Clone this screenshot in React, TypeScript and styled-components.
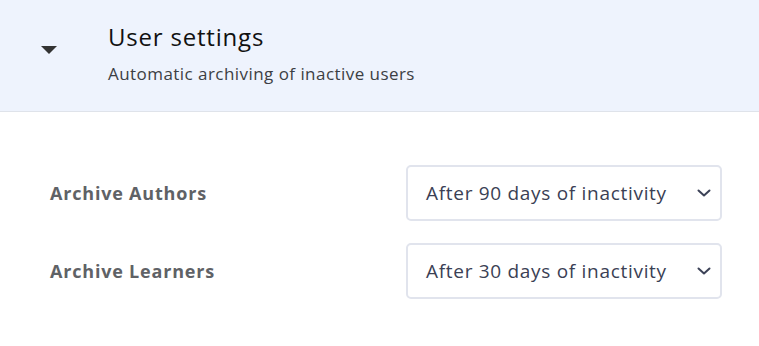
import React from "react";
import styled, { createGlobalStyle } from "styled-components";

const Global = createGlobalStyle`
  html, body { margin: 0; padding: 0; background: #ffffff; }
  body { font-family: "Open Sans", "Noto Sans", sans-serif; }
`;

const Page = styled.div`
  width: 759px;
  height: 346px;
  background: #ffffff;
`;

const Header = styled.div`
  display: flex;
  align-items: flex-start;
  height: 112px;
  box-sizing: border-box;
  background: #eef3fd;
  border-bottom: 1px solid #dfe3ea;
`;

const ToggleCell = styled.div`
  width: 108px;
  display: flex;
  justify-content: flex-start;
  padding-left: 41px;
  padding-top: 46px;
  box-sizing: border-box;
`;

const Caret = styled.div`
  width: 0;
  height: 0;
  border-left: 8px solid transparent;
  border-right: 8px solid transparent;
  border-top: 8px solid #333333;
`;

const HeaderText = styled.div`
  display: flex;
  flex-direction: column;
  padding-top: 22px;
`;

const Title = styled.div`
  font-size: 24px;
  line-height: 30px;
  letter-spacing: 0.8px;
  color: #111111;
  font-weight: 500;
`;

const Subtitle = styled.div`
  font-size: 17px;
  line-height: 20px;
  letter-spacing: 0.45px;
  margin-top: 12px;
  color: #3c3f44;
`;

const Body = styled.div`
  display: flex;
  flex-direction: column;
  gap: 22px;
  padding: 53px 37px 0 50px;
`;

const Row = styled.div`
  display: flex;
  align-items: center;
  justify-content: space-between;
`;

const Label = styled.div`
  font-size: 18px;
  font-weight: 700;
  letter-spacing: 0.8px;
  color: #5f6266;
`;

const Select = styled.div`
  width: 316px;
  height: 56px;
  box-sizing: border-box;
  border: 2px solid #e1e4ed;
  border-radius: 5px;
  display: flex;
  align-items: center;
  justify-content: space-between;
  padding: 0 9px 0 18px;
  font-size: 19px;
  letter-spacing: 0.7px;
  color: #3a4054;
  background: #ffffff;
`;

const Chevron = () => (
  <svg width="14" height="8" viewBox="0 0 14 8" fill="none">
    <path d="M1.5 1.5 L7 6.5 L12.5 1.5" stroke="#3c4257" strokeWidth="2" strokeLinecap="round" strokeLinejoin="round" />
  </svg>
);

const rows = [
  { label: "Archive Authors", value: "After 90 days of inactivity" },
  { label: "Archive Learners", value: "After 30 days of inactivity" },
];

export default function App() {
  return (
    <Page>
      <Global />
      <Header>
        <ToggleCell>
          <Caret />
        </ToggleCell>
        <HeaderText>
          <Title>User settings</Title>
          <Subtitle>Automatic archiving of inactive users</Subtitle>
        </HeaderText>
      </Header>
      <Body>
        {rows.map((r) => (
          <Row key={r.label}>
            <Label>{r.label}</Label>
            <Select>
              <span>{r.value}</span>
              <Chevron />
            </Select>
          </Row>
        ))}
      </Body>
    </Page>
  );
}
